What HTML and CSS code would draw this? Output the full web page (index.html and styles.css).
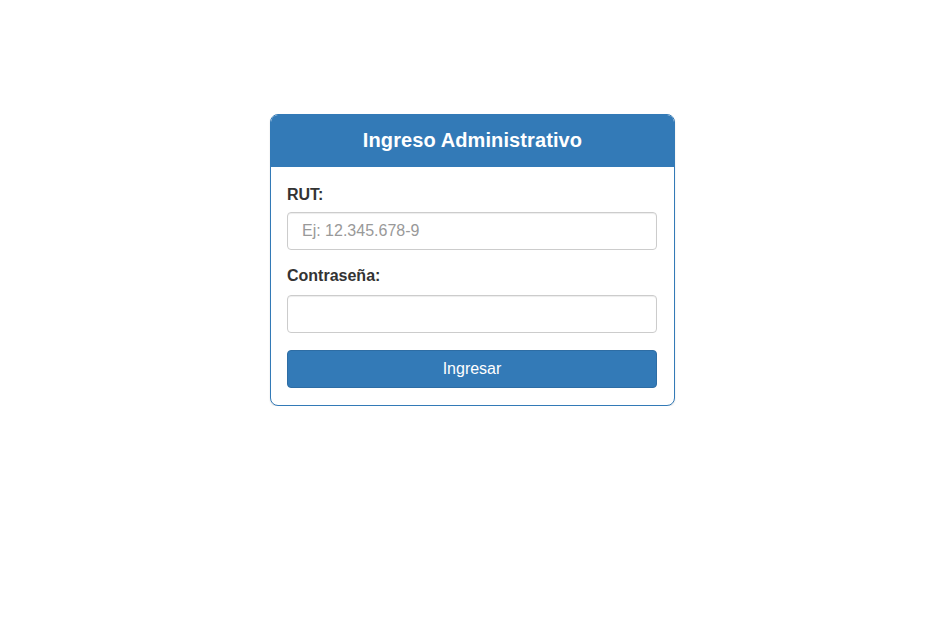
FILE: index.html
```html
<!DOCTYPE html>
<html lang="es">
<head>
<meta charset="utf-8">
<title>Ingreso Administrativo</title>
<link rel="stylesheet" href="styles.css">
</head>
<body>
<div class="page">
  <div class="card">
    <div class="card-header">
      <h3 class="card-title">Ingreso Administrativo</h3>
    </div>
    <form class="card-body">
      <div class="form-group">
        <label class="form-label" for="rut">RUT:</label>
        <input class="form-input" id="rut" type="text" placeholder="Ej: 12.345.678-9">
      </div>
      <div class="form-group form-group-second">
        <label class="form-label form-label-second" for="pass">Contraseña:</label>
        <input class="form-input" id="pass" type="password">
      </div>
      <button class="btn-primary" type="button">Ingresar</button>
    </form>
  </div>
</div>
</body>
</html>
```
FILE: styles.css
```css
* { box-sizing: border-box; }
html, body {
  margin: 0;
  padding: 0;
  background: #ffffff;
  font-family: "Liberation Sans", Arial, sans-serif;
  color: #333333;
}
.page {
  padding-top: 114px;
}
.card {
  margin-left: 270px;
  width: 405px;
  border: 1px solid #337ab7;
  border-radius: 8px;
  background: #ffffff;
  box-shadow: 0 1px 2px rgba(0, 0, 0, 0.12);
  overflow: hidden;
}
.card-header {
  background: #337ab7;
  padding: 13px 16px 15px 16px;
  border-radius: 6px 6px 0 0;
}
.card-title {
  margin: 0;
  font-size: 20px;
  line-height: 24px;
  font-weight: bold;
  letter-spacing: 0.1px;
  color: #ffffff;
  text-align: center;
}
.card-body {
  display: flex;
  flex-direction: column;
  padding: 18px 17px 17px 16px;
  margin: 0;
}
.form-group {
  display: flex;
  flex-direction: column;
}
.form-group-second {
  margin-top: 16px;
}
.form-label {
  font-size: 16px;
  line-height: 20px;
  font-weight: bold;
  color: #333333;
  margin-bottom: 7px;
}
.form-label-second {
  margin-bottom: 9px;
}
.form-input {
  width: 100%;
  height: 38px;
  padding: 6px 14px;
  font-family: "Liberation Sans", Arial, sans-serif;
  font-size: 16px;
  color: #555555;
  border: 1px solid #cccccc;
  border-radius: 4px;
  box-shadow: inset 0 1px 1px rgba(0, 0, 0, 0.075);
  outline: none;
  background: #ffffff;
}
.form-input::placeholder {
  color: #999999;
}
.btn-primary {
  margin-top: 17px;
  width: 100%;
  height: 38px;
  border: 1px solid #2e6da4;
  border-radius: 4px;
  background: #337ab7;
  color: #ffffff;
  font-family: "Liberation Sans", Arial, sans-serif;
  font-size: 16px;
  cursor: pointer;
}
```
